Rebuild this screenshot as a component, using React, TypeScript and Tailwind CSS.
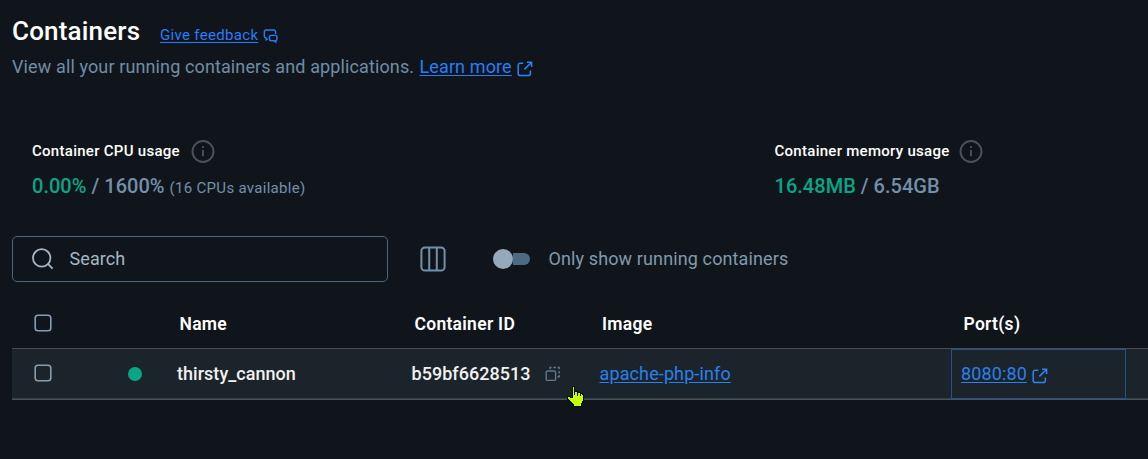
import React from "react";

function ExternalIcon({ className }: { className?: string }) {
  return (
    <svg className={className} width="16" height="16" viewBox="0 0 16 16" fill="none" stroke="#2a84f5" strokeWidth="1.5">
      <path d="M6.2 2.2H3.4Q1.2 2.2 1.2 4.4V12.4Q1.2 14.6 3.4 14.6H11.2Q13.4 14.6 13.4 12.4V9.6" />
      <path d="M10 1.2H14.6V6M14.6 1.2L7.4 8.4" />
    </svg>
  );
}

function InfoIcon() {
  return (
    <svg width="24" height="24" viewBox="0 0 24 24" fill="none" stroke="#4f5255" strokeWidth="1.9">
      <circle cx="12" cy="12.5" r="10.5" />
      <path d="M12 10.9V17.3M12 7.2V9" />
    </svg>
  );
}

function Checkbox() {
  return (
    <svg className="block" width="18" height="18" viewBox="0 0 18 18" fill="none" stroke="#849db2" strokeWidth="1.6">
      <rect x="1.2" y="1.2" width="15.6" height="15.6" rx="2.8" />
    </svg>
  );
}

function HandCursor() {
  return (
    <svg className="absolute left-[566px] top-[385px]" width="18" height="22" viewBox="0 0 18 22" shapeRendering="crispEdges">
      <path
        d="M6 1H8V6H11V7H14V8H16V9H17V16H16V18H15V21H7V19H6V18H5V17H4V16H3V15H2V14H1V11H4V12H6Z"
        fill="#c3ff00"
        stroke="#0a0a0a"
        strokeWidth="1"
      />
      <path d="M8.5 6V10M11.5 7V11M14.5 8V11" stroke="#0a0a0a" fill="none" />
    </svg>
  );
}

export default function App() {
  return (
    <div className="relative flex h-[459px] w-[1148px] flex-col overflow-hidden bg-[#10151b] font-['Roboto',sans-serif] whitespace-nowrap">
      <header className="flex h-[84px] flex-col pl-3">
        <div className="flex h-[51px] pt-[15px]">
          <h1 className="w-[148px] text-[26px] leading-8 font-medium tracking-[0.18px] text-white">Containers</h1>
          <a className="mt-[10px] text-[15px] leading-5 tracking-[0.32px] text-[#267dfb] underline underline-offset-2">Give feedback</a>
          <svg className="mt-[13px] ml-[4.5px]" width="16" height="16" viewBox="0 0 16 16" fill="none" stroke="#267dfb" strokeWidth="1.4">
            <path d="M4.6 10.6L3.2 11.8V10.2Q1.3 10 1.3 8.3V4Q1.3 2 3.3 2H10.6Q12.6 2 12.6 4V6" />
            <path d="M8.2 7.4H12.2Q14 7.4 14 9.2V10.8Q14 12.4 12.7 12.6V14L11 12.7H8.2Q6.4 12.7 6.4 10.9V9.2Q6.4 7.4 8.2 7.4Z" />
          </svg>
        </div>
        <p className="flex h-8 pt-1 text-[18px] leading-6 tracking-[0.12px] text-[#6f8da8]">
          <span className="w-[407.5px]">View all your running containers and applications.</span>
          <a className="text-[#267dfb] underline underline-offset-2">Learn more</a>
          <ExternalIcon className="mt-[6px] ml-[5px]" />
        </p>
      </header>

      <section className="flex h-[152px] pt-[55px] pl-8">
        <div className="w-[742.5px]">
          <div className="flex h-6 items-center gap-[11px] text-[15px] font-medium tracking-[0.28px] text-white">
            <span>Container CPU usage</span>
            <InfoIcon />
          </div>
          <div className="mt-[11px] text-[20px] leading-6 font-medium tracking-[0.02px] text-[#7390aa]">
            <span className="text-[#0aa587]">0.00%</span> / 1600%{" "}
            <span className="text-[15px] font-normal tracking-[0.3px]">(16 CPUs available)</span>
          </div>
        </div>
        <div>
          <div className="flex h-6 items-center gap-[9.5px] text-[15px] font-medium tracking-[0.28px] text-white">
            <span>Container memory usage</span>
            <InfoIcon />
          </div>
          <div className="mt-[11px] text-[20px] leading-6 font-medium tracking-[0.02px] text-[#7390aa]">
            <span className="text-[#0aa587]">16.48MB</span> / 6.54GB
          </div>
        </div>
      </section>

      <div className="flex h-[46px] items-center pl-3">
        <div className="flex h-[46px] w-[376px] items-center rounded-[5px] border border-[#49677f] pl-[19px]">
          <svg width="22" height="22" viewBox="0 0 22 22" fill="none" stroke="#a5b7c5" strokeWidth="1.8">
            <circle cx="9.7" cy="9.9" r="8.7" />
            <path d="M15.9 15.9L20.6 20.6" />
          </svg>
          <span className="ml-[15.5px] pb-[2px] text-[18px] tracking-[0.08px] text-[#a5b7c5]">Search</span>
        </div>
        <svg className="ml-8" width="26" height="26" viewBox="0 0 26 26" fill="none" stroke="#7390aa" strokeWidth="2">
          <rect x="1.4" y="1.4" width="23.2" height="23.2" rx="3.6" />
          <path d="M9.2 1V25M16.8 1V25" />
        </svg>
        <div className="ml-[47px] flex h-5 w-[37px] items-center">
          <span className="h-5 w-5 shrink-0 rounded-full bg-[#94aaba]" />
          <span className="-ml-2 h-3 w-[25px] rounded-r-full bg-[#4d6a83] [clip-path:inset(0_0_0_8px)]" />
        </div>
        <span className="ml-[18.5px] pb-[2px] text-[18px] tracking-[0.12px] text-[#8199ac]">Only show running containers</span>
      </div>

      <div className="ml-3 grid grid-cols-[164px_235px_188px_352px_1fr]">
        <div className="col-span-5 grid h-[66px] grid-cols-subgrid items-center pt-4 text-[17.5px] font-semibold tracking-[0.28px] text-white">
          <div className="pl-[22px]"><Checkbox /></div>
          <span className="pt-[3px] pl-[3.5px]">Name</span>
          <span className="pt-[3px] pl-[3.5px]">Container ID</span>
          <span className="pt-[3px] pl-[3px]">Image</span>
          <span className="pt-[3px] pl-[12.5px]">Port(s)</span>
        </div>
        <div className="col-span-5 grid h-[52px] grid-cols-subgrid items-center border-t border-b border-t-[#4b4b4b] border-b-[#4b5155] bg-[#1c242b] text-[18px] tracking-[0.12px] shadow-[inset_0_-1px_0_#2d4251]">
          <div className="flex items-center pb-[2px] pl-[22px]">
            <Checkbox />
            <span className="mt-px ml-[76px] h-[14px] w-[14px] rounded-full bg-[#0aa587]" />
          </div>
          <span className="pb-[2px] pl-px font-medium tracking-[0.03px] text-[#f1f1f1]">thirsty_cannon</span>
          <div className="flex items-center pb-[2px] pl-[0.5px]">
            <span className="font-medium tracking-[0.03px] text-[#f1f1f1]">b59bf6628513</span>
            <svg className="mt-[2px] ml-[14px]" width="16" height="16" viewBox="0 0 16 16" fill="none" stroke="#5d778c" strokeWidth="1.4">
              <rect x="1.2" y="5" width="9.4" height="9.4" rx="1.2" />
              <path d="M5 3.2V1.5H6.6M8.2 1.5H11M12.6 1.5H14.2V3.2M14.2 5V7.4M14.2 9V10.7H12.4" />
            </svg>
          </div>
          <a className="pb-[2px] pl-[0.5px] text-[#2a80ee]"><span className="underline underline-offset-2">apache-php-info</span></a>
          <div className="flex h-full">
            <div className="flex w-[175px] items-center border border-[#225391] pl-[9px]">
              <a className="pb-[2px] text-[#2a80ee]"><span className="underline underline-offset-2">8080:80</span></a>
              <ExternalIcon className="mt-[3px] ml-[5px]" />
            </div>
          </div>
        </div>
      </div>
      <HandCursor />
    </div>
  );
}
